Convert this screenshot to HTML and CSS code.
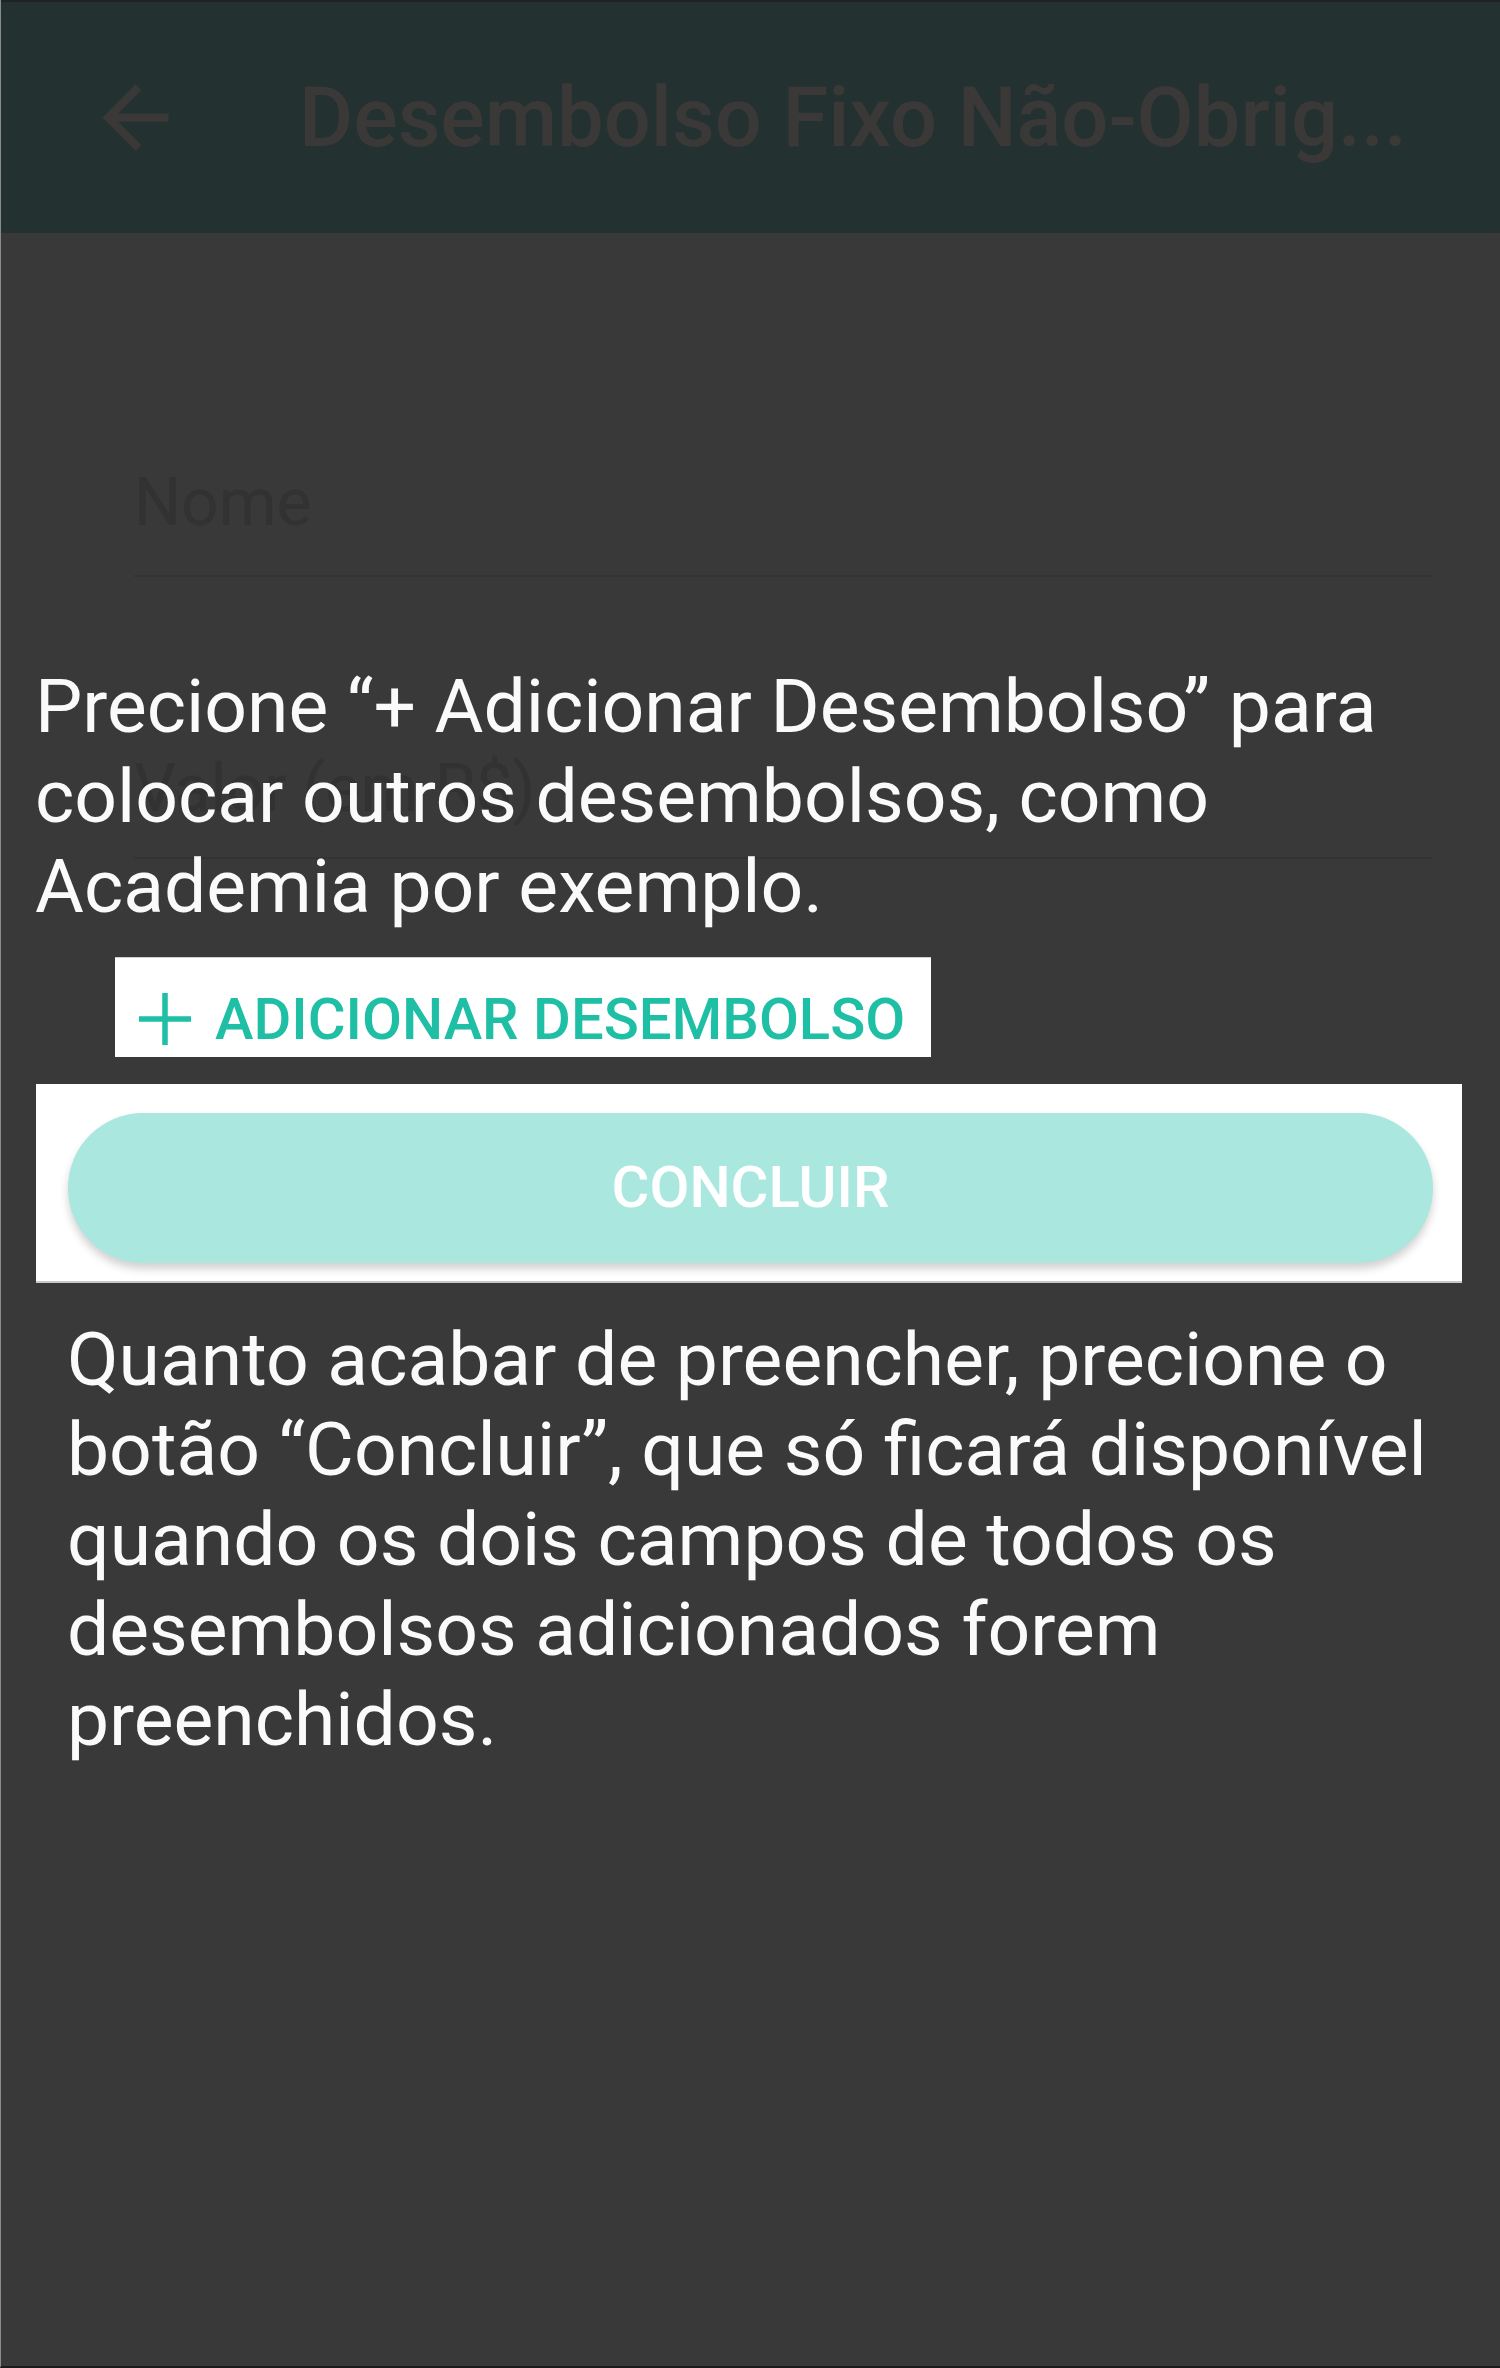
FILE: index.html
```html
<!DOCTYPE html>
<html lang="pt-BR">
<head>
<meta charset="utf-8">
<title>Desembolso Fixo Não-Obrigatório</title>
<link rel="stylesheet" href="styles.css">
</head>
<body>
<div class="screen">
  <header class="appbar">
    <svg class="back" viewBox="0 0 24 24" aria-hidden="true"><path d="M20 11H7.83l5.59-5.59L12 4l-8 8 8 8 1.41-1.41L7.83 13H20v-2z"/></svg>
    <h1 class="title">Desembolso Fixo Não-Obrig...</h1>
  </header>
  <main class="form">
    <div class="field field-first">
      <span class="label">Nome</span>
      <div class="underline"></div>
    </div>
    <div class="field field-second">
      <span class="label">Valor (em R$)</span>
      <div class="underline"></div>
    </div>
  </main>
  <div class="tutorial">
    <p class="tip tip-top">Precione “+ Adicionar Desembolso” para colocar outros desembolsos, como Academia por exemplo.</p>
    <div class="add-spot">
      <svg class="plus" viewBox="0 0 52 52" aria-hidden="true"><path d="M26 0V52M0 26H52"/></svg>
      <span class="add-text">ADICIONAR DESEMBOLSO</span>
    </div>
    <div class="done-spot">
      <div class="done-btn">CONCLUIR</div>
    </div>
    <p class="tip tip-bottom">Quanto acabar de preencher, precione o botão “Concluir”, que só ficará disponível quando os dois campos de todos os desembolsos adicionados forem preenchidos.</p>
  </div>
</div>
</body>
</html>
```

FILE: styles.css
```css
* { box-sizing: border-box; }
html, body { margin: 0; padding: 0; background: #393939; }
body { font-family: Roboto, "Noto Sans", "Liberation Sans", sans-serif; }

.screen {
  position: relative;
  width: 1500px;
  height: 2368px;
  background: #393939;
  border-left: 1px solid #8b8b8b;
  border-bottom: 2px solid #1b1b1b;
  overflow: hidden;
}

.appbar {
  height: 233px;
  background: #233230;
  border-top: 2px solid #1e2424;
  display: flex;
  align-items: center;
  padding-left: 85px;
}
.back { width: 99px; height: 99px; fill: #3b3838; flex: none; }
.title {
  margin: 0 0 0 114px;
  font-size: 83px;
  font-weight: 500;
  color: #3b3838;
  white-space: nowrap;
  line-height: 1;
}

.form { padding: 231px 68px 0 133px; }
.field { display: flex; flex-direction: column; }
.label {
  font-size: 66px;
  line-height: 78px;
  color: #323232;
}
.underline { height: 2px; background: #333333; margin-top: 33px; }
.field-second { margin-top: 173px; }
.field-second .underline { margin-top: 29px; }

.tutorial {
  position: absolute;
  top: 0; left: 0; right: 0;
  padding-top: 661px;
  display: flex;
  flex-direction: column;
  align-items: flex-start;
}
.tip {
  margin: 0;
  color: #fafafa;
  font-size: 75px;
  line-height: 90px;
}
.tip-top { margin-left: 34px; width: 1420px; }
.add-spot {
  margin: 26px 0 0 114px;
  height: 100px;
  background: #ffffff;
  border-top: 1px solid #cfcfcf;
  display: flex;
  align-items: center;
  padding: 22px 26px 0 24px;
  gap: 24px;
}
.plus { width: 52px; height: 52px; stroke: #1fbfa6; stroke-width: 5.5; fill: none; flex: none; }
.add-text {
  color: #1fbfa6;
  font-size: 58px;
  font-weight: 500;
  line-height: 1;
}
.done-spot {
  margin: 27px 0 0 35px;
  width: 1426px;
  height: 199px;
  background: #ffffff;
  border-bottom: 2px solid #c9c9c9;
  padding: 29px 29px 20px 32px;
}
.done-btn {
  height: 150px;
  border-radius: 75px;
  background: #a9e7df;
  box-shadow: 0 6px 9px rgba(0, 0, 0, 0.18);
  color: #ffffff;
  font-size: 58px;
  font-weight: 500;
  display: flex;
  align-items: center;
  justify-content: center;
  padding-bottom: 3px;
}
.tip-bottom { margin: 31px 0 0 66px; width: 1400px; }
```
